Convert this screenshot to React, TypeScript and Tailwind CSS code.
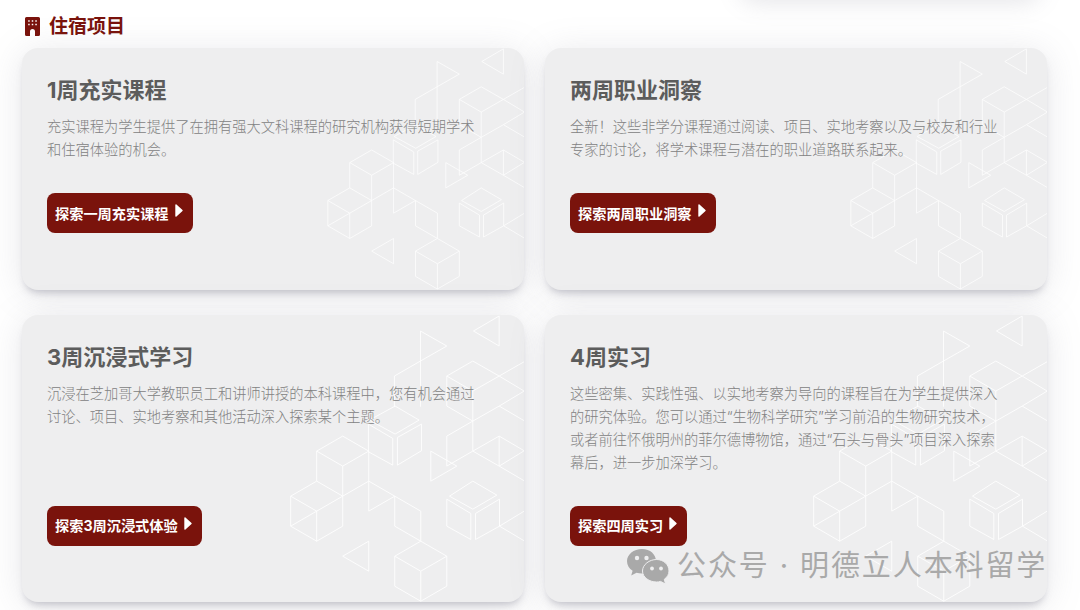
import React from "react";

const font = { fontFamily: 'Inter, "Noto Sans CJK SC", sans-serif' };

const cards = [
  {
    title: "1周充实课程",
    body: "充实课程为学生提供了在拥有强大文科课程的研究机构获得短期学术和住宿体验的机会。",
    button: "探索一周充实课程",
  },
  {
    title: "两周职业洞察",
    body: "全新！这些非学分课程通过阅读、项目、实地考察以及与校友和行业专家的讨论，将学术课程与潜在的职业道路联系起来。",
    button: "探索两周职业洞察",
  },
  {
    title: "3周沉浸式学习",
    body: "沉浸在芝加哥大学教职员工和讲师讲授的本科课程中，您有机会通过讨论、项目、实地考察和其他活动深入探索某个主题。",
    button: "探索3周沉浸式体验",
  },
  {
    title: "4周实习",
    body: "这些密集、实践性强、以实地考察为导向的课程旨在为学生提供深入的研究体验。您可以通过“生物科学研究”学习前沿的生物研究技术，或者前往怀俄明州的菲尔德博物馆，通过“石头与骨头”项目深入探索幕后，进一步加深学习。",
    button: "探索四周实习",
  },
];

// cube line art, scales with the card height and sits on the right edge
function Cubes() {
  return (
    <svg
      viewBox="-3 45 735 860"
      preserveAspectRatio="xMaxYMid meet"
      className="absolute right-0 top-0 h-full"
      fill="none"
      stroke="#ffffff"
      strokeWidth="2.8"
      strokeOpacity="0.9"
    >
      <path d="M657 48L580 93L657 138Z" />
      <path d="M421 93L500 138L421 183L343 228V320M421 93V320" />
      <path d="M345 318L417 360L345 402L268 360Z" />
      <path d="M265 372L338 415V495L265 455Z" />
      <path d="M352 412L424 372V452L352 495Z" />
      <path d="M500 228L578 183L657 228L578 273Z" />
      <path d="M500 228V318L578 363M578 273V453M657 228L732 185M657 228L732 273L657 318L732 362" />
      <path d="M657 318L578 363L500 408V498L578 453L657 498L732 542" />
      <path d="M578 453L657 408L732 452L657 498M657 408V498" />
      <path d="M452 453L530 498L452 543Z" />
      <path d="M110 453L188 408L266 453L188 498Z" />
      <path d="M110 453V543M188 498V588M266 453V633M266 543L188 588" />
      <path d="M188 588L110 633L32 588L110 543Z" />
      <path d="M32 588V678L110 723L188 678V588M110 633V723M110 633L32 678" />
      <path d="M266 543L344 588L266 633" />
      <path d="M344 588L422 633V723M344 588V678L422 723" />
      <path d="M344 768L422 723L500 768L422 813Z" />
      <path d="M344 768V858L422 903L500 858V768M422 813V903" />
      <path d="M266 723L188 768L266 813Z" />
      <path d="M508 588L578 543L650 585L578 627Z" />
      <path d="M500 597L572 640V718L500 678Z" />
      <path d="M586 718V640L658 597V678Z" />
      <path d="M658 678L732 633M658 678L732 722" />
    </svg>
  );
}

function Card({ title, body, button }: { title: string; body: string; button: string }) {
  return (
    <div className="relative overflow-hidden rounded-2xl bg-[#eeeeef] shadow-[0_6px_8px_-4px_rgba(90,90,110,0.36),0_4px_36px_rgba(120,120,140,0.18)]">
      <Cubes />
      <div className="relative flex h-full flex-col pl-[25px] pr-[47px] pb-[56.3px] pt-[27px]">
        <h3 className="text-[22px] font-bold leading-[30px] text-[#5c5c5c]">{title}</h3>
        <p className="mt-[11px] max-w-[430px] text-[14.25px] font-light leading-[22.7px] text-[#828282]">{body}</p>
        <div className="mt-auto pt-[30px]">
          <a className="inline-flex h-[40px] items-center gap-[6px] rounded-lg bg-[#7a130c] pl-2 pr-[10px] text-[14.2px] font-bold text-white">
            {button}
            <svg width="8" height="13" viewBox="0 0 8 13" className="mb-[5px]">
              <path d="M1 1L7 6.500L1 12Z" fill="#fff" stroke="#fff" strokeWidth="1.4" strokeLinejoin="round" />
            </svg>
          </a>
        </div>
      </div>
    </div>
  );
}

export default function App() {
  return (
    <div className="relative h-[610px] w-[1080px] overflow-hidden bg-white" style={font}>
      {/* edge of the panel above, only its shadow shows */}
      <div className="absolute left-[740px] top-[-40px] h-[40px] w-[300px] rounded-2xl shadow-[0_2px_24px_rgba(120,120,140,0.2)]" />

      <div className="relative px-[22px]">
        <div className="flex h-[48px] items-center gap-[9px] pl-[3px] pt-[6px]">
          <svg width="15" height="19" viewBox="0 0 15 19" fill="#7a130c" className="mb-[1px]">
            <path
              fillRule="evenodd"
              d="M1.500 0H13.500A1.500 1.500 0 0 1 15 1.500V17.500A1.500 1.500 0 0 1 13.500 19H10V14.500A2.500 2.500 0 0 0 5 14.500V19H1.500A1.500 1.500 0 0 1 0 17.500V1.500A1.500 1.500 0 0 1 1.500 0ZM3.200 3.200V4.700H4.700V3.200ZM6.750 3.200V4.700H8.250V3.200ZM10.300 3.200V4.700H11.800V3.200ZM3.200 6.700V8.200H4.700V6.700ZM6.750 6.700V8.200H8.250V6.700ZM10.300 6.700V8.200H11.800V6.700Z"
            />
          </svg>
          <h2 className="text-[19px] font-bold text-[#7a130c]">住宿项目</h2>
        </div>

        <div className="grid grid-cols-[502px_502px] grid-rows-[241.6px_286.9px] gap-x-[21px] gap-y-[25.8px]">
          {cards.map((c) => (
            <Card key={c.title} {...c} />
          ))}
        </div>
      </div>

      {/* watermark over the last card */}
      <div className="absolute left-[627px] top-[546px] flex items-center gap-[8px] text-[29px] leading-[40px] tracking-[1.9px] text-[#a9a9a9]">
        <svg width="42" height="36" viewBox="0 0 42 36">
          <path d="M15 1C6.700 1 0 6.500 0 13.300C0 17.200 2.200 20.600 5.600 22.800L4.200 27.500L9.500 24.700C11.200 25.200 13 25.500 15 25.500C22 25.500 29 20.500 29 13.300C29 6.500 23.300 1 15 1Z" fill="#a9a9a9" />
          <circle cx="10" cy="10" r="2.200" fill="#eeeeef" />
          <circle cx="19.500" cy="10" r="2.200" fill="#eeeeef" />
          <path d="M29.500 11.500C22.500 11.500 15.500 16.500 15.500 23C15.500 29.500 22.500 34 29.500 34C31 34 32.300 33.800 33.500 33.400L38.500 36L37.300 31.300C40.200 29.300 42 26.300 42 23C42 16.500 36.500 11.500 29.500 11.500Z" fill="#a9a9a9" stroke="#eeeeef" strokeWidth="1" />
          <circle cx="25" cy="20.500" r="1.900" fill="#eeeeef" />
          <circle cx="34" cy="20.500" r="1.900" fill="#eeeeef" />
        </svg>
        <span>公众号 · 明德立人本科留学</span>
      </div>
    </div>
  );
}
